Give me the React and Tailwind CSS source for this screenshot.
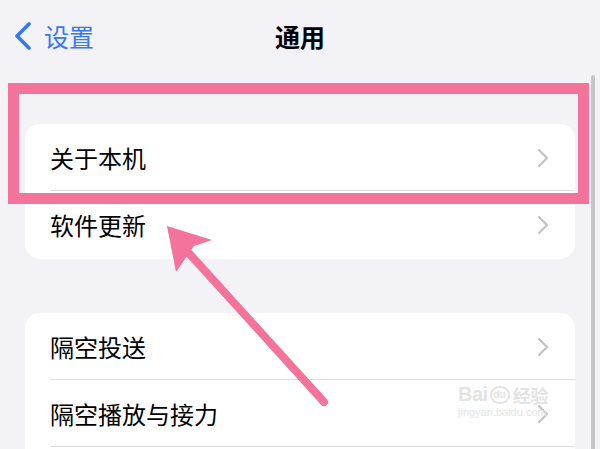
import React from 'react';

const font = { fontFamily: '"Noto Sans CJK SC", "Noto Sans", sans-serif' };

const Chevron = () => (
  <svg width="12" height="20" viewBox="0 0 12 20" className="shrink-0">
    <path d="M2 2 L10 10 L2 18" fill="none" stroke="#c4c4c7" strokeWidth="2.4" strokeLinecap="round" strokeLinejoin="round" />
  </svg>
);

const Row = ({ label, last, h = 'h-[67px]' }) => (
  <div className={`${h} relative flex items-center pl-[25px] pr-[26px]`}>
    <span className="flex-1 text-[24px] leading-none text-black">{label}</span>
    <Chevron />
    {!last && <div className="absolute left-[25px] right-0 bottom-0 h-px bg-[#dedee1]" />}
  </div>
);

const App = () => {
  return (
    <div className="relative w-[600px] h-[449px] overflow-hidden bg-[#f2f2f7]" style={font}>
      {/* nav bar */}
      <div className="relative h-[72px] flex items-center">
        <div className="flex items-center pl-[14px]">
          <svg width="18" height="28" viewBox="0 0 18 28">
            <path d="M15 2 L3 14 L15 26" fill="none" stroke="#3478f6" strokeWidth="3.6" strokeLinecap="round" strokeLinejoin="round" />
          </svg>
          <span className="ml-[12px] text-[25px] leading-none text-[#3478f6]">设置</span>
        </div>
        <div className="absolute inset-0 flex items-center justify-center">
          <span className="text-[25px] leading-none font-bold text-black">通用</span>
        </div>
      </div>

      {/* groups */}
      <div className="mt-[52px] px-[25px] flex flex-col gap-[54px]">
        <div className="bg-white rounded-[15px] overflow-hidden">
          <Row label="关于本机" />
          <Row label="软件更新" last h="h-[68px]" />
        </div>
        <div className="bg-white rounded-[15px] overflow-hidden">
          <Row label="隔空投送" />
          <Row label="隔空播放与接力" />
          <div className="h-[67px]" />
        </div>
      </div>

      {/* scroll indicator */}
      <div className="absolute left-[591px] top-[75px] w-[4px] h-[400px] rounded-full bg-[#c6c6ca]" />

      {/* annotation box */}
      <div className="absolute left-[8px] top-[83px] w-[581px] h-[121px] border-[11px] border-[#f4739a]" />

      {/* annotation arrow */}
      <svg className="absolute left-0 top-0" width="600" height="449" viewBox="0 0 600 449">
        <line x1="186" y1="250" x2="324" y2="402" stroke="#f4739a" strokeWidth="8" strokeLinecap="round" />
        <path d="M167 226 L212 240 L194 246 L176 272 Z" fill="#f4739a" />
      </svg>

      {/* watermark */}
      <div className="absolute left-[458px] top-[384px] flex flex-col items-start text-[#e3e3e3]">
        <div className="flex items-end leading-none">
          <span className="text-[20px] font-bold tracking-tight" style={{ fontFamily: '"Liberation Sans", sans-serif' }}>Bai</span>
          <span className="ml-[2px] w-[20px] h-[18px] rounded-full border-[2px] border-[#e3e3e3] text-[10px] font-bold flex items-center justify-center" style={{ fontFamily: '"Liberation Sans", sans-serif' }}>du</span>
          <span className="ml-[3px] text-[18px] font-bold">经验</span>
        </div>
        <span className="mt-[3px] text-[11px] leading-none" style={{ fontFamily: '"Liberation Sans", sans-serif' }}>jingyan.baidu.com</span>
      </div>
    </div>
  );
};

export default App;
